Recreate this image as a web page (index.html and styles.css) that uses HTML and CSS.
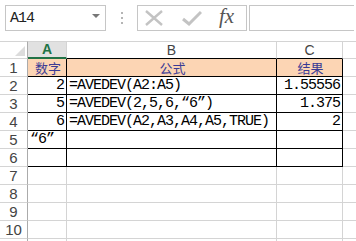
FILE: index.html
```html
<!DOCTYPE html>
<html lang="zh">
<head>
    <meta charset="UTF-8">
    <title>AVEDEV</title>
    <link rel="stylesheet" href="styles.css">
</head>
<body>
<div class="formula-bar">
    <div class="name-box">
        <span>A14</span>
        <span class="drop"></span>
    </div>
    <div class="dots"><span></span><span></span><span></span></div>
    <div class="fx-box">
        <svg width="20" height="16" viewBox="0 0 20 16">
            <path d="M2 1 L18 15 M18 1 L2 15" stroke="#c3c3c3" stroke-width="2.4" fill="none"/>
        </svg>
        <svg width="20" height="16" viewBox="0 0 20 16">
            <path d="M1 9 L7 14 L19 2" stroke="#c3c3c3" stroke-width="3" fill="none"/>
        </svg>
        <span class="fx">fx</span>
    </div>
    <div class="input-box"></div>
</div>

<table class="sheet">
    <tr class="col-head">
        <th class="corner"><span class="tri"></span></th>
        <th class="sel">A</th>
        <th class="top">B</th>
        <th class="top">C</th>
        <th></th>
    </tr>
    <tr>
        <th class="rn">1</th>
        <td class="in hd">数字</td>
        <td class="in hd">公式</td>
        <td class="in hd">结果</td>
        <td></td>
    </tr>
    <tr>
        <th class="rn">2</th>
        <td class="in num">2</td>
        <td class="in">=AVEDEV(A2:A5)</td>
        <td class="in num">1.55556</td>
        <td></td>
    </tr>
    <tr>
        <th class="rn">3</th>
        <td class="in num">5</td>
        <td class="in">=AVEDEV(2,5,6,“6”)</td>
        <td class="in num">1.375</td>
        <td></td>
    </tr>
    <tr>
        <th class="rn">4</th>
        <td class="in num">6</td>
        <td class="in">=AVEDEV(A2,A3,A4,A5,TRUE)</td>
        <td class="in num">2</td>
        <td></td>
    </tr>
    <tr>
        <th class="rn">5</th>
        <td class="in">“6”</td>
        <td class="in"></td>
        <td class="in"></td>
        <td></td>
    </tr>
    <tr>
        <th class="rn">6</th>
        <td class="in"></td>
        <td class="in"></td>
        <td class="in"></td>
        <td></td>
    </tr>
    <tr><th class="rn">7</th><td></td><td></td><td></td><td></td></tr>
    <tr><th class="rn">8</th><td></td><td></td><td></td><td></td></tr>
    <tr><th class="rn">9</th><td></td><td></td><td></td><td></td></tr>
    <tr><th class="rn">10</th><td></td><td></td><td></td><td></td></tr>
    <tr class="tail"><th class="rn"></th><td></td><td></td><td></td><td></td></tr>
</table>
</body>
</html>
```

FILE: styles.css
```css
body {
    margin: 0;
    background: #fff;
    overflow: hidden;
    font-family: "Liberation Mono", "Noto Sans CJK SC", monospace;
}

/* barre de formule */
.formula-bar {
    display: flex;
    padding: 5px 0 0 5px;
    height: 26px;
}
.name-box {
    box-sizing: border-box;
    width: 101px;
    height: 26px;
    border: 1px solid #c6c6c6;
    display: flex;
    align-items: center;
    justify-content: space-between;
    padding: 0 5px 0 4px;
    font-size: 15px;
    letter-spacing: -1px;
    color: #222;
}
.drop {
    width: 0;
    height: 0;
    border-left: 4px solid transparent;
    border-right: 4px solid transparent;
    border-top: 4px solid #777;
    margin-bottom: 4px;
}
.dots {
    width: 31px;
    display: flex;
    flex-direction: column;
    align-items: center;
    justify-content: center;
    gap: 3px;
}
.dots span {
    width: 2px;
    height: 2px;
    background: #b5b5b5;
}
.fx-box {
    box-sizing: border-box;
    width: 110px;
    height: 26px;
    border: 1px solid #c6c6c6;
    display: flex;
    align-items: center;
    padding-left: 6px;
    gap: 18px;
}
.fx {
    font-family: "Liberation Serif", serif;
    font-style: italic;
    font-size: 21px;
    color: #555;
    margin-left: -1px;
    margin-top: -3px;
}
.input-box {
    box-sizing: border-box;
    margin-left: 2px;
    width: 105px;
    height: 26px;
    border: 1px solid #c6c6c6;
    border-right: none;
}

/* feuille */
.sheet {
    margin-top: 10px;
    border-collapse: separate;
    border-spacing: 0;
    table-layout: fixed;
    width: 356px;
}
.sheet th, .sheet td {
    box-sizing: border-box;
    padding: 0;
    border-right: 1px solid #d4d4d4;
    border-bottom: 1px solid #d4d4d4;
    font-weight: normal;
    white-space: nowrap;
}
.sheet tr {
    height: 18px;
}
.sheet tr.tail {
    height: 2px;
}
.tail th, .tail td {
    border-bottom: none !important;
    line-height: 2px !important;
    height: 2px;
}
.col-head th {
    border-top: 1px solid #d4d4d4;
    height: 18px;
    font-family: "Liberation Sans", sans-serif;
    font-size: 14px;
    color: #444;
    line-height: 15px;
}
.col-head th:nth-child(1) { width: 28px; }
.col-head th:nth-child(2) { width: 39px; }
.col-head th:nth-child(3) { width: 210px; }
.col-head th:nth-child(4) { width: 66px; }
.col-head th:nth-child(5) { width: 13px; border-right: none; }

.corner {
    border-right-color: #ababab !important;
    vertical-align: bottom;
}
.tri {
    display: block;
    width: 10px;
    height: 10px;
    margin: 0 2px 2px auto;
    background: #dcdcdc;
    clip-path: polygon(100% 0, 100% 100%, 0 100%);
}
.sel {
    background: #e1e1e1;
    color: #217346 !important;
    font-weight: bold !important;
    border-bottom: 2px solid #217346 !important;
}
.top {
    border-bottom-color: #000 !important;
}

.rn {
    font-family: "Liberation Sans", sans-serif;
    font-size: 15px;
    color: #444;
    text-align: center;
    line-height: 17px;
    border-right-color: #ababab !important;
}

.sheet td {
    font-size: 15px;
    letter-spacing: -1px;
    line-height: 17px;
    color: #000;
    padding-left: 2px;
}
.sheet td:last-child {
    border-right: none;
}
.sheet td.in {
    border-right-color: #000;
    border-bottom-color: #000;
}
.sheet td.num {
    text-align: right;
    padding-right: 2px;
}
.sheet td.hd {
    background: #fcd5b4;
    text-align: center;
    font-family: "Noto Sans CJK SC", sans-serif;
    font-size: 13px;
    letter-spacing: 0;
    line-height: 17px;
    color: #3b3b94;
}
```
